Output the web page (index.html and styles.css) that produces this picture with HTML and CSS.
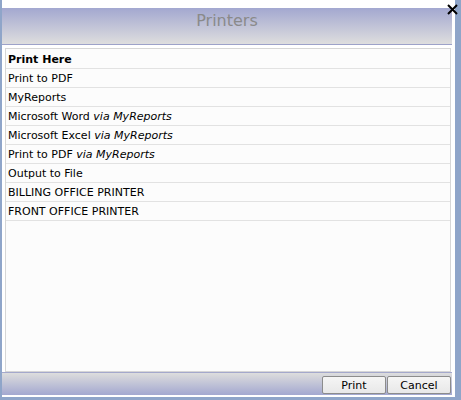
FILE: index.html
```html
<!DOCTYPE html>
<html lang="en">
<head>
  <meta charset="UTF-8" />
  <title>Printers</title>
  <link rel="stylesheet" href="styles.css">
</head>
<body>

<div class="dialog">
  <div class="titlebar">
    <span class="title">Printers</span>
  </div>

  <!-- close button -->
  <button class="close" title="Close">
    <svg width="11" height="11" viewBox="0 0 11 11">
      <path d="M1 1 L10 10 M10 1 L1 10" stroke="#000" stroke-width="2" fill="none"/>
    </svg>
  </button>

  <ul class="printers">
    <li class="default">Print Here</li>
    <li>Print to PDF</li>
    <li>MyReports</li>
    <li>Microsoft Word <i>via MyReports</i></li>
    <li>Microsoft Excel <i>via MyReports</i></li>
    <li>Print to PDF <i>via MyReports</i></li>
    <li>Output to File</li>
    <li>BILLING OFFICE PRINTER</li>
    <li>FRONT OFFICE PRINTER</li>
  </ul>

  <div class="footer">
    <button class="btn">Print</button>
    <button class="btn">Cancel</button>
  </div>
</div>

</body>
</html>
```

FILE: styles.css
```css
body {
  margin: 0;
  background: #8fa5c9;
  font-family: 'DejaVu Sans', Verdana, sans-serif;
  font-size: 11px;
  color: #000;
}

.dialog {
  position: relative;
  box-sizing: border-box;
  width: 453px;
  height: 397px;
  margin-left: 2px;
  padding: 8px 3px 2px 0;
  background: #fff;
  display: flex;
  flex-direction: column;
}

.titlebar {
  height: 36px;
  border-bottom: 1px solid #9da2c9;
  background: linear-gradient(to bottom, #a3a8d0, #dedede);
  text-align: center;
}

.title {
  display: inline-block;
  padding-top: 3px;
  font-size: 16px;
  color: #8a8a8a;
}

.close {
  position: absolute;
  top: 4px;
  left: 445px;
  width: 11px;
  height: 11px;
  padding: 0;
  border: 0;
  background: none;
  line-height: 0;
  cursor: pointer;
}

.printers {
  flex: 1;
  list-style: none;
  margin: 3px 1px 0 3px;
  padding: 1px 0 0;
  border: 1px solid #d6d6d6;
  background: #fcfcfc;
}

.printers li {
  box-sizing: border-box;
  height: 19px;
  padding: 1px 0 0 2px;
  line-height: 18px;
  border-bottom: 1px solid #e2e2e2;
  white-space: nowrap;
}

.printers .default {
  font-weight: bold;
}

.footer {
  height: 22px;
  border-top: 1px solid #a4a8cc;
  background: linear-gradient(to bottom, #dddddd, #a3a8d0);
  display: flex;
  justify-content: flex-end;
  align-items: flex-start;
  gap: 1px;
  padding-right: 1px;
}

.btn {
  box-sizing: border-box;
  flex: 0 0 64px;
  margin-top: 3px;
  height: 18px;
  padding: 0;
  border: 1px solid #8c8c8c;
  border-radius: 2px;
  background: linear-gradient(to bottom, #f5f5f5, #e8e8e8);
  font-family: 'DejaVu Sans', Verdana, sans-serif;
  font-size: 11px;
  color: #000;
}
```
